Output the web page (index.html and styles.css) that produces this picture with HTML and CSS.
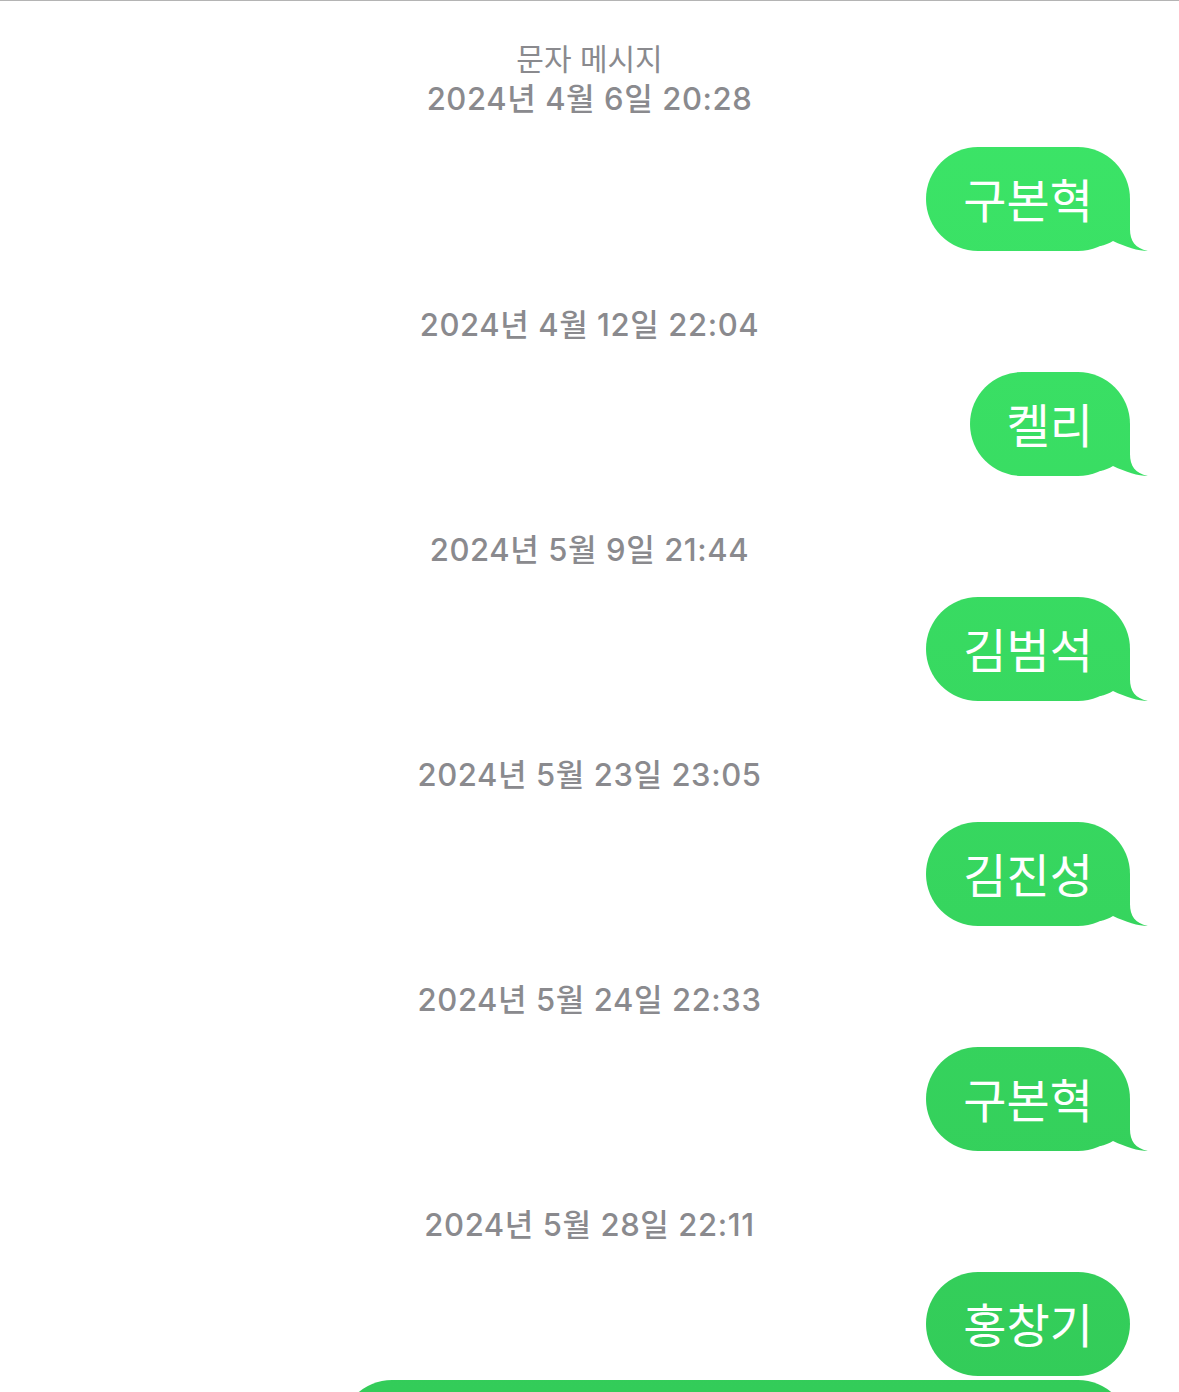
FILE: index.html
```html
<!DOCTYPE html>
<html lang="ko">
<head>
  <meta charset="UTF-8">
  <meta name="viewport" content="width=device-width, initial-scale=1.0">
  <title>문자 메시지</title>
  <link rel="stylesheet" href="styles.css">
</head>
<body>
  <div class="topline"></div>
  <div class="thread">
    <div class="stamp first">
      <div class="kind">문자 메시지</div>
      <div><b>2024년 4월 6일</b> 20:28</div>
    </div>
    <div class="row"><div class="bubble tail">구본혁</div></div>

    <div class="stamp"><b>2024년 4월 12일</b> 22:04</div>
    <div class="row"><div class="bubble tail">켈리</div></div>

    <div class="stamp"><b>2024년 5월 9일</b> 21:44</div>
    <div class="row"><div class="bubble tail">김범석</div></div>

    <div class="stamp"><b>2024년 5월 23일</b> 23:05</div>
    <div class="row"><div class="bubble tail">김진성</div></div>

    <div class="stamp"><b>2024년 5월 24일</b> 22:33</div>
    <div class="row"><div class="bubble tail">구본혁</div></div>

    <div class="stamp"><b>2024년 5월 28일</b> 22:11</div>
    <div class="row"><div class="bubble">홍창기</div></div>
    <div class="row tight"><div class="bubble wide">&nbsp;</div></div>
  </div>
</body>
</html>
```

FILE: styles.css
```css
body {
  margin: 0;
  background-color: #fff;
  font-family: "Noto Sans CJK KR", "Noto Sans", sans-serif;
  overflow: hidden;
}
.topline {
  height: 1px;
  background-color: #b4b4b4;
}
.thread {
  padding: 39px 49px 0 49px;
}
.stamp {
  margin-top: 53px;
  text-align: center;
  color: #8a8a8e;
  font-family: Inter, "Noto Sans CJK KR", sans-serif;
  font-size: 31px;
  font-weight: 500;
  letter-spacing: 0.6px;
  line-height: 39px;
  padding-top: 1px;
  height: 38px;
}
.stamp b {
  font-weight: 500;
}
.stamp.first {
  margin-top: 0;
  height: auto;
  padding-top: 0;
}
.stamp .kind {
  font-size: 30px;
  font-weight: 400;
  letter-spacing: 0;
}
.row {
  display: flex;
  justify-content: flex-end;
  margin-top: 29px;
}
.row.tight {
  margin-top: 4px;
}
.bubble {
  position: relative;
  height: 104px;
  padding: 0 37px;
  border-radius: 52px;
  color: #fff;
  font-size: 47px;
  line-height: 102px;
  background: linear-gradient(#3ce668, #33cc59) fixed;
}
.bubble.wide {
  width: 716px;
}
.bubble.tail::after {
  content: "";
  position: absolute;
  right: -18px;
  bottom: 0;
  width: 48px;
  height: 52px;
  background: linear-gradient(#3ce668, #33cc59) fixed;
  clip-path: path("M 30 0 L 30 30 C 30 42 35 49 48 52 C 38 52 26 48 13 42 C 9 44.5 5 46 0 47 L 0 0 Z");
}
```
